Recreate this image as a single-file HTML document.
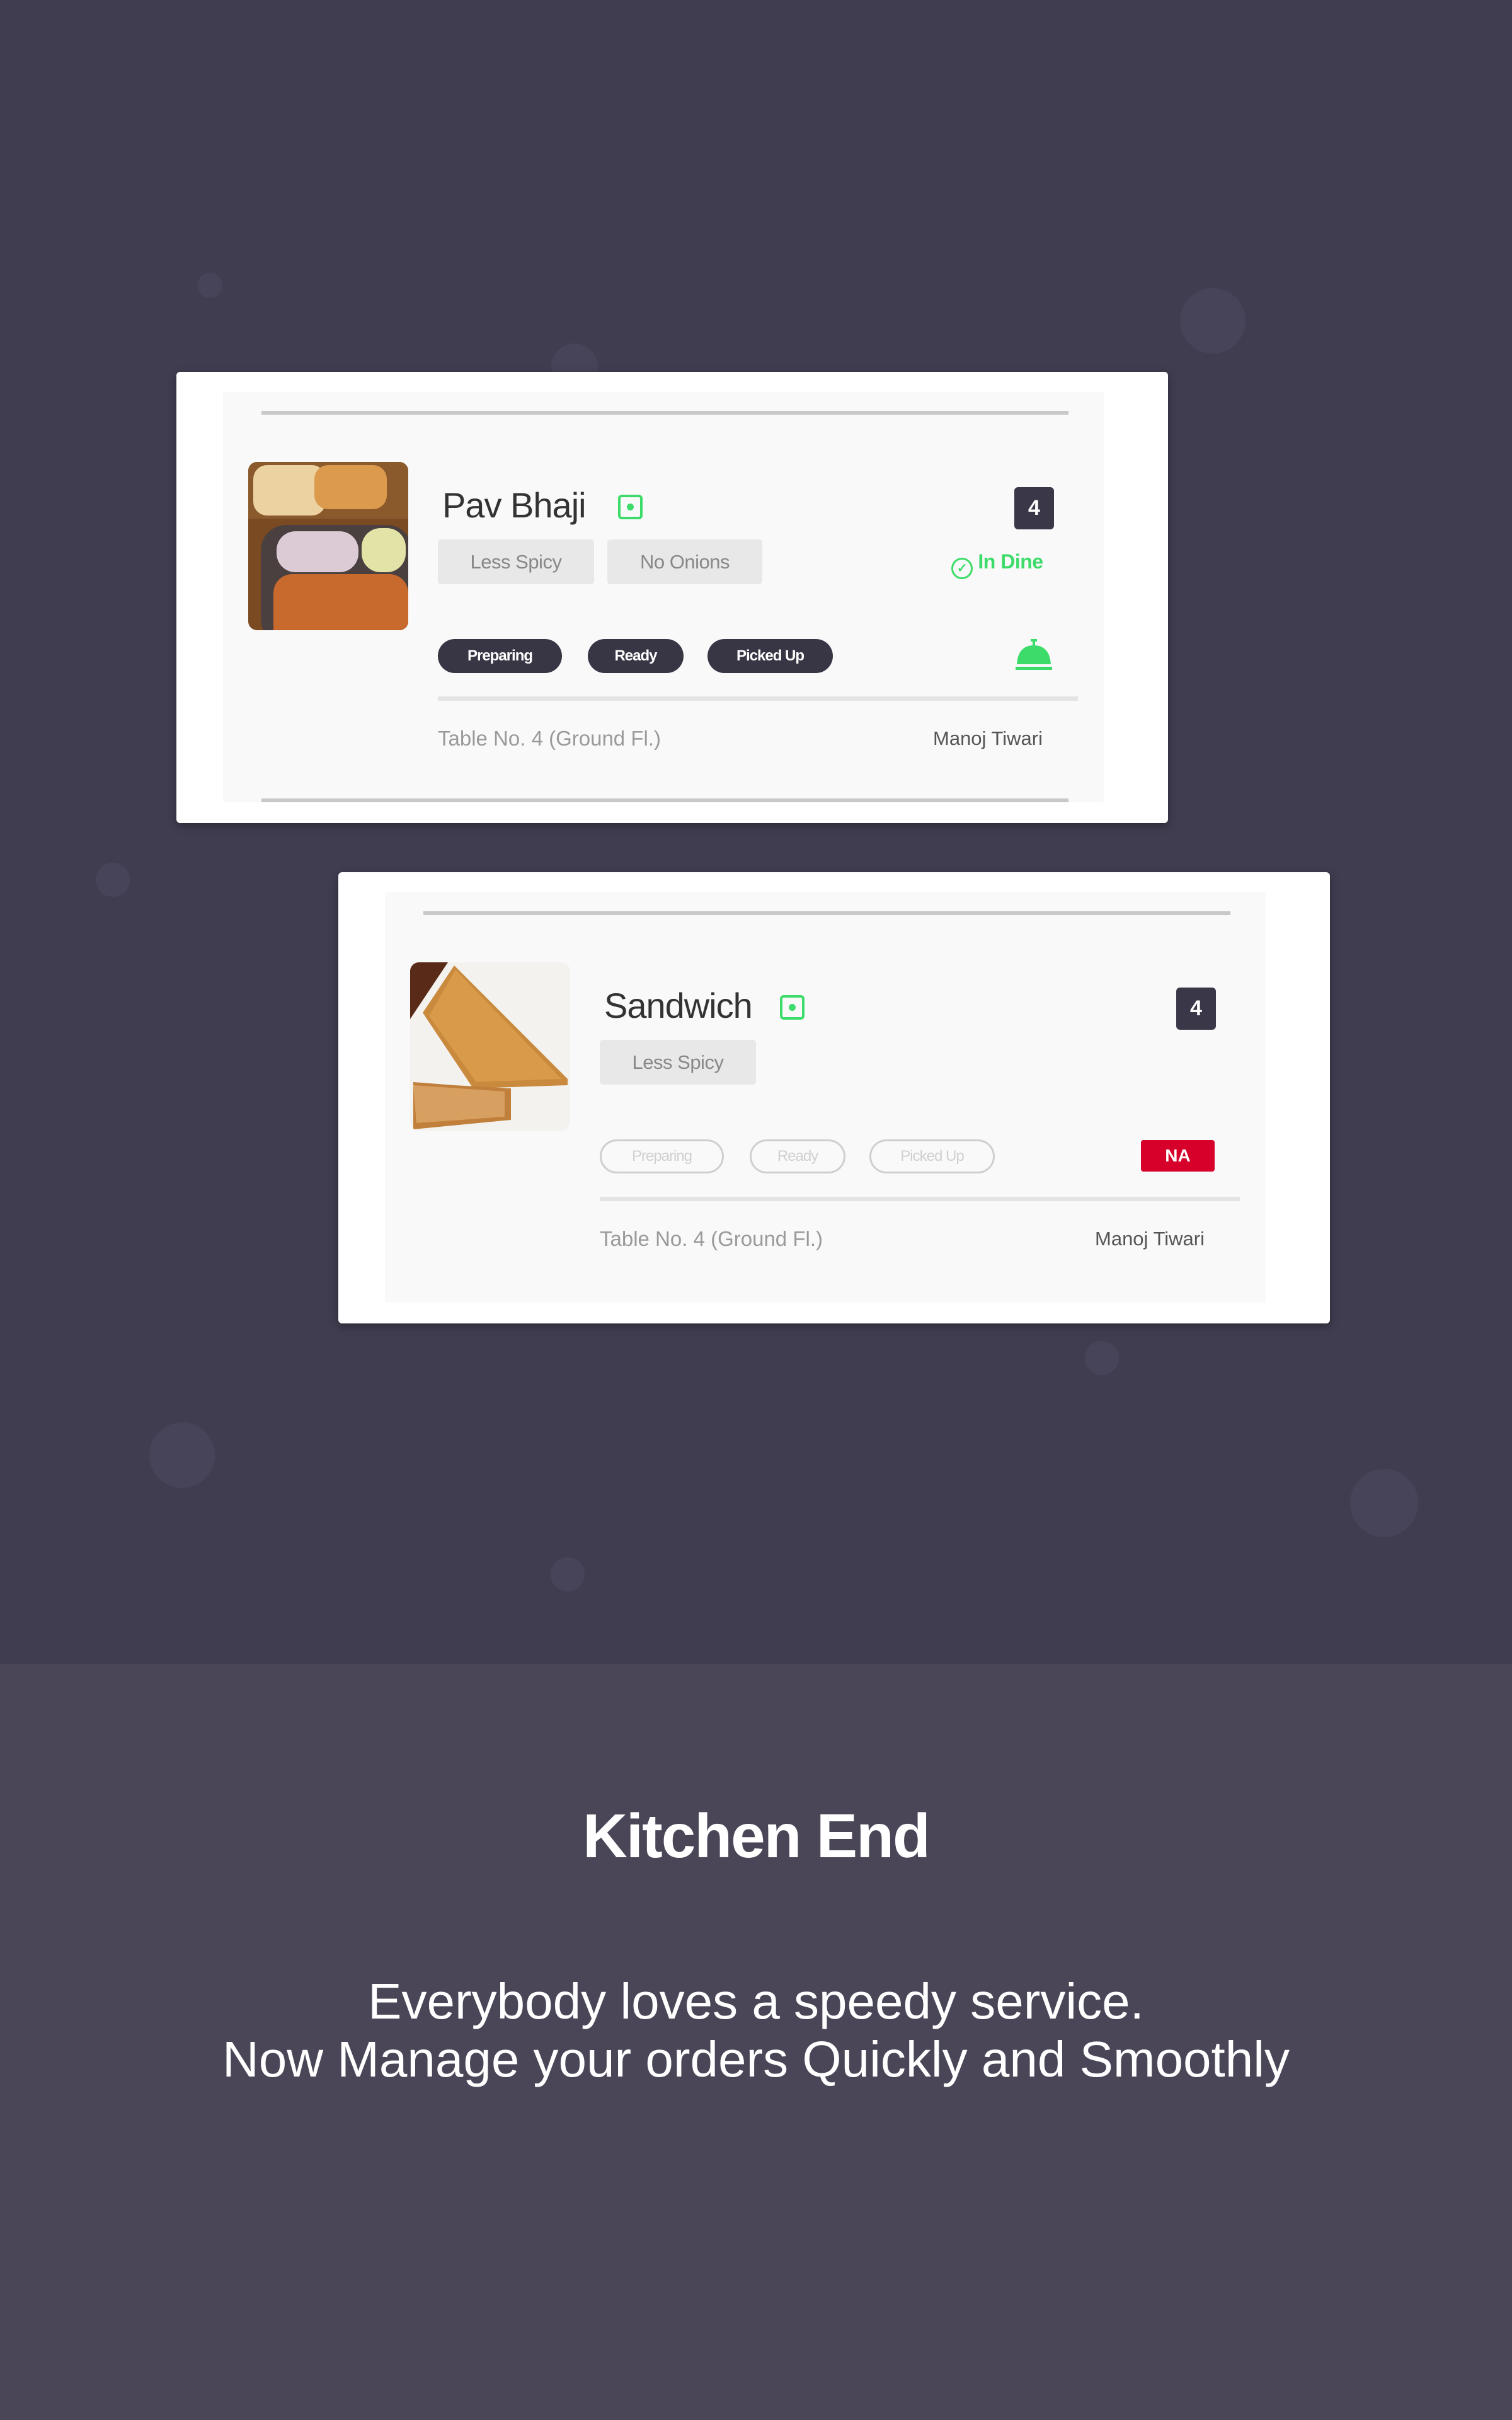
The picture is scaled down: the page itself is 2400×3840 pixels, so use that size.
<!DOCTYPE html>
<html><head><meta charset="utf-8"><style>
*{margin:0;padding:0;box-sizing:border-box}
body{width:2400px;height:3840px;position:relative;overflow:hidden;background:#413d51;font-family:"Liberation Sans",sans-serif}
.ab{position:absolute}
.dot{position:absolute;border-radius:50%;background:#474359}
.bottom{position:absolute;left:0;top:2640px;width:2400px;height:1200px;background:#4a4657}
.card{position:absolute;width:1574px;height:716px;background:#fff;border-radius:6px;box-shadow:0 4px 14px rgba(0,0,0,.35)}
.inner{position:absolute;left:74px;top:32px;width:1398px;height:651px;background:#f9f9f9}
.line{position:absolute;left:135px;width:1281px;height:6px;background:#c8c8c8}
.title{position:absolute;left:422px;top:180px;font-size:56px;color:#333;line-height:64px;letter-spacing:-1px}
.veg{position:absolute;left:701px;top:195px;width:39px;height:39px;border:4px solid #3ddc6a;border-radius:6px}
.veg:after{content:"";position:absolute;left:10px;top:10px;width:11px;height:11px;border-radius:50%;background:#3ddc6a}
.badge{position:absolute;left:1330px;top:183px;width:63px;height:67px;background:#3a3848;border-radius:6px;color:#fff;font-size:34px;font-weight:bold;text-align:center;line-height:67px}
.tag{position:absolute;top:266px;height:71px;background:#e8e8e8;border-radius:5px;color:#888;font-size:31px;text-align:center;line-height:71px;letter-spacing:-0.5px}
.pill{position:absolute;top:424px;height:54px;border-radius:27px;font-size:24px;font-weight:bold;text-align:center;line-height:54px;letter-spacing:-1px}
.pd{background:#383645;color:#fff}
.po{border:3px solid #cfcfcf;color:#d0d0d0;font-weight:normal;line-height:48px}
.div{position:absolute;left:415px;top:515px;width:1016px;height:7px;background:#e4e4e4}
.foot{position:absolute;top:562px;font-size:31px;line-height:40px}
.img{position:absolute;left:114px;top:143px;width:254px;height:267px;border-radius:14px;overflow:hidden}
</style></head><body>
<div class="dot" style="left:313px;top:433px;width:40px;height:40px"></div>
<div class="dot" style="left:1873px;top:457px;width:104px;height:104px"></div>
<div class="dot" style="left:875px;top:545px;width:74px;height:74px"></div>
<div class="dot" style="left:152px;top:1369px;width:54px;height:54px"></div>
<div class="dot" style="left:1722px;top:2128px;width:54px;height:54px"></div>
<div class="dot" style="left:237px;top:2257px;width:104px;height:104px"></div>
<div class="dot" style="left:2143px;top:2331px;width:108px;height:108px"></div>
<div class="dot" style="left:874px;top:2471px;width:54px;height:54px"></div>
<div class="bottom"></div>

<div class="card" style="left:280px;top:590px">
 <div class="inner"></div>
 <div class="line" style="top:62px"></div>
 <div class="line" style="top:677px"></div>
 <div class="img" style="background:#7a4a22">
  <div class="ab" style="left:0;top:0;width:254px;height:90px;background:#8a5a2c"></div>
  <div class="ab" style="left:8px;top:5px;width:115px;height:80px;background:#ecd2a0;border-radius:22px"></div>
  <div class="ab" style="left:105px;top:5px;width:115px;height:70px;background:#dc9a4c;border-radius:22px"></div>
  <div class="ab" style="left:20px;top:100px;width:240px;height:190px;background:#4a4040;border-radius:40px"></div>
  <div class="ab" style="left:45px;top:110px;width:130px;height:65px;background:#dccbd4;border-radius:30px"></div>
  <div class="ab" style="left:180px;top:105px;width:70px;height:70px;background:#e2e3a6;border-radius:30px"></div>
  <div class="ab" style="left:40px;top:178px;width:214px;height:100px;background:#c8692e;border-radius:30px 30px 0 0"></div>
 </div>
 <div class="title">Pav Bhaji</div>
 <div class="veg"></div>
 <div class="badge">4</div>
 <div class="tag" style="left:415px;width:248px">Less Spicy</div>
 <div class="tag" style="left:684px;width:246px">No Onions</div>
 <div class="ab" style="left:1230px;top:283px;font-size:32px;font-weight:bold;color:#3ddc6a;line-height:36px;letter-spacing:-0.5px"><span style="display:inline-block;width:34px;height:34px;border:3px solid #3ddc6a;border-radius:50%;vertical-align:-6px;text-align:center;font-size:20px;line-height:28px">✓</span> In Dine</div>
 <div class="pill pd" style="left:415px;width:197px">Preparing</div>
 <div class="pill pd" style="left:653px;width:152px">Ready</div>
 <div class="pill pd" style="left:843px;width:199px">Picked Up</div>
 <svg class="ab" style="left:1330px;top:422px" width="62" height="56" viewBox="0 0 62 56"><rect x="26" y="2" width="10" height="4" fill="#3ddc6a"/><rect x="29" y="4" width="4" height="10" fill="#3ddc6a"/><path d="M4 42 Q6 12 31 12 Q56 12 58 42Z" fill="#3ddc6a"/><rect x="2" y="46" width="58" height="5" fill="#3ddc6a"/></svg>
 <div class="div"></div>
 <div class="foot" style="left:415px;color:#9a9a9a;font-size:33px">Table No. 4 (Ground Fl.)</div>
 <div class="foot" style="right:199px;color:#555">Manoj Tiwari</div>
</div>

<div class="card" style="left:537px;top:1384px">
 <div class="inner"></div>
 <div class="line" style="top:62px"></div>
 <div class="img" style="background:#f4f2ef">
  <svg width="254" height="267" viewBox="0 0 254 267"><path d="M0 0 L60 0 L0 90Z" fill="#5a2a18"/><path d="M20 80 L70 5 L250 185 L250 195 L100 200Z" fill="#c98a3e"/><path d="M30 85 L72 12 L240 185 L105 190Z" fill="#d99a4a"/><path d="M5 190 L70 195 L160 200 L160 250 L5 265Z" fill="#c07f3a"/><path d="M5 195 L150 205 L150 245 L10 255Z" fill="#d8a060"/></svg>
 </div>
 <div class="title">Sandwich</div>
 <div class="veg"></div>
 <div class="badge">4</div>
 <div class="tag" style="left:415px;width:248px">Less Spicy</div>
 <div class="pill po" style="left:415px;width:197px">Preparing</div>
 <div class="pill po" style="left:653px;width:152px">Ready</div>
 <div class="pill po" style="left:843px;width:199px">Picked Up</div>
 <div class="ab" style="left:1274px;top:425px;width:117px;height:50px;background:#d6002a;border-radius:4px;color:#fff;font-weight:bold;font-size:28px;text-align:center;line-height:50px">NA</div>
 <div class="div"></div>
 <div class="foot" style="left:415px;color:#9a9a9a;font-size:33px">Table No. 4 (Ground Fl.)</div>
 <div class="foot" style="right:199px;color:#555">Manoj Tiwari</div>
</div>

<div class="ab" style="left:0;top:2848px;width:2400px;text-align:center;color:#fff;font-size:98px;font-weight:bold;line-height:130px;letter-spacing:-2px">Kitchen End</div>
<div class="ab" style="left:0;top:3130px;width:2400px;text-align:center;color:#fff;font-size:80px;line-height:92px;letter-spacing:0px">Everybody loves a speedy service.<br>Now Manage your orders Quickly and Smoothly</div>
</body></html>
